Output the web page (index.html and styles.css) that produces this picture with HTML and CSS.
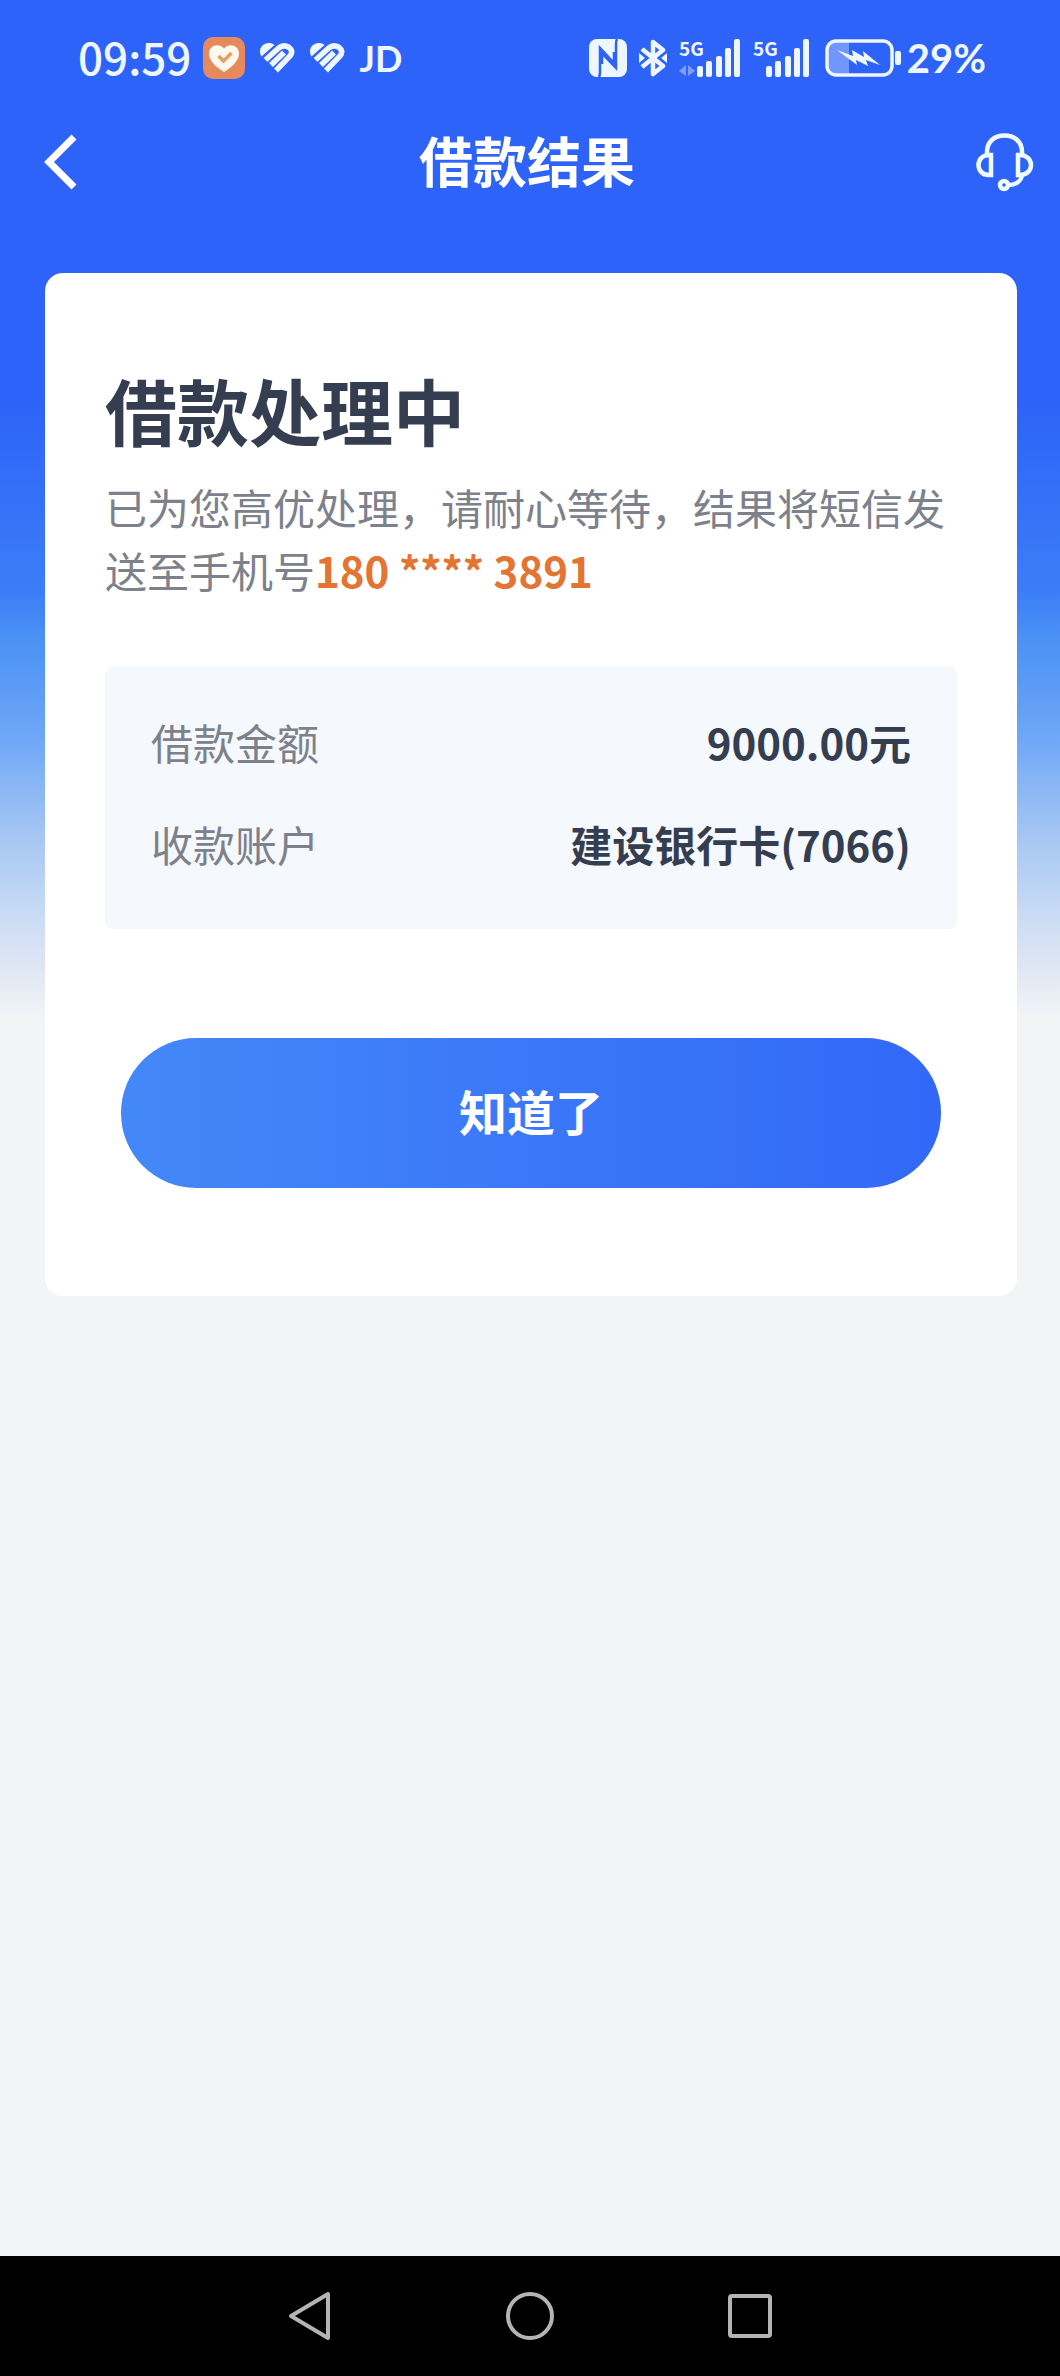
FILE: index.html
```
<!DOCTYPE html>
<html lang="zh-CN">
<head>
<meta charset="utf-8">
<meta name="viewport" content="width=device-width, initial-scale=1">
<title>借款结果</title>
<link rel="stylesheet" href="styles.css">
</head>
<body>
<div class="page">
  <div class="status">
    <div class="status-side">
      <span class="clock">09:59</span>
      <svg class="app-icon" width="42" height="42" viewBox="0 0 42 42" aria-hidden="true">
        <rect width="42" height="42" rx="10" fill="#e58a5c"/>
        <path d="M21 35C13 30 6 24 6 16.500C6 8 16 5.500 21 11.500C26 5.500 36 8 36 16.500C36 24 29 30 21 35Z" fill="#fff8ee"/>
        <path d="M15.500 19l5 5 8-8" fill="none" stroke="#e0a062" stroke-width="3.500"/>
      </svg>
      <svg class="brand" width="36" height="32" viewBox="0 0 36 32" aria-hidden="true">
        <path d="M2.500 14.500C-2 7 4 0 11 1Q14 1.500 15.500 3Z" fill="#eef6ff"/>
        <path d="M6.500 18L18.500 7Q24 2 29.500 5Q35 9 31 14L17 28.500M12 23L25 10.500" fill="none" stroke="#eef6ff" stroke-width="5.600"/>
      </svg>
      <svg class="brand" width="36" height="32" viewBox="0 0 36 32" aria-hidden="true">
        <path d="M2.500 14.500C-2 7 4 0 11 1Q14 1.500 15.500 3Z" fill="#eef6ff"/>
        <path d="M6.500 18L18.500 7Q24 2 29.500 5Q35 9 31 14L17 28.500M12 23L25 10.500" fill="none" stroke="#eef6ff" stroke-width="5.600"/>
      </svg>
      <span class="carrier">JD</span>
    </div>
    <div class="status-side status-right">
      <svg width="38" height="38" viewBox="0 0 38 38" aria-hidden="true">
        <rect width="38" height="38" rx="8" fill="#eef6ff"/>
        <path d="M10 38Q11 36 11 33V9L25 24V13M28 0Q27 2 27 5V29L13 14.500V25" fill="none" stroke="#2d63f8" stroke-width="2.500"/>
      </svg>
      <svg width="28" height="38" viewBox="0 0 28 38" aria-hidden="true">
        <path d="M3 10L24 27L14 35V3L24 11L3 28" fill="none" stroke="#eef6ff" stroke-width="4.500" stroke-linejoin="round"/>
        <path d="M0 14L6 19L0 24ZM28 14L22 19L28 24Z" fill="#eef6ff"/>
      </svg>
      <svg width="62" height="54" viewBox="0 -8 62 54" aria-hidden="true">
        <text class="net" x="0" y="17">5G</text>
        <g fill="#eef6ff"><rect x="18" y="27" width="6" height="11" rx="2"/><rect x="27" y="22" width="6" height="16" rx="2"/><rect x="37" y="17" width="6" height="21" rx="2"/><rect x="46" y="9" width="6" height="29" rx="2"/><rect x="55" y="0" width="6" height="38" rx="2"/></g>
        <path d="M0 32L7 26V37M9 26V37L16 32Z" fill="#7d9ffb"/>
      </svg>
      <svg width="57" height="54" viewBox="0 -8 57 54" aria-hidden="true">
        <text class="net" x="0" y="17">5G</text>
        <g fill="#eef6ff"><rect x="13" y="27" width="6" height="11" rx="2"/><rect x="22" y="22" width="6" height="16" rx="2"/><rect x="32" y="17" width="6" height="21" rx="2"/><rect x="41" y="9" width="6" height="29" rx="2"/><rect x="50" y="0" width="6" height="38" rx="2"/></g>
      </svg>
      <svg class="battery" width="76" height="38" viewBox="0 0 76 38" aria-hidden="true">
        <path d="M11 2H24V36H11Q2 36 2 27V11Q2 2 11 2Z" fill="#7296fb"/>
        <rect x="2" y="2" width="65" height="34" rx="9" fill="none" stroke="#eef6ff" stroke-width="3.500"/>
        <rect x="70" y="12" width="6" height="14" rx="2" fill="#eef6ff"/>
        <path d="M12 11L28 17L27 11L39 18L38 12L55 26L41 21L43 27L31 21L32 26Z" fill="#eef6ff"/>
      </svg>
      <span class="percent">29%</span>
    </div>
  </div>

  <header class="bar">
    <button class="icon-button" type="button" aria-label="返回">
      <svg width="34" height="58" viewBox="0 0 34 58"><path d="M30 4L5 29L30 54" fill="none" stroke="#fff" stroke-width="7"/></svg>
    </button>
    <h1 class="bar-title">借款结果</h1>
    <button class="icon-button" type="button" aria-label="客服">
      <svg width="58" height="60" viewBox="0 0 58 60" fill="none" stroke="#f0fbff" stroke-width="4.500">
        <path d="M11 23V20C11 10 18 3.500 28.500 3.500S46 10 46 20V23"/>
        <path d="M15 23V43H13C6 43 2.500 38 2.500 33S6 23 13 23ZM42 23V43H44C51 43 55 38 55 33S51 23 44 23Z"/>
        <path d="M46 43C45 49 40 53 33 53"/><circle cx="28" cy="53" r="4"/>
      </svg>
    </button>
  </header>

  <main class="card">
    <h2 class="heading">借款处理中</h2>
    <p class="note">已为您高优处理，请耐心等待，结果将短信发送至手机号<strong class="phone">180 **** 3891</strong></p>
    <dl class="details">
      <div class="row"><dt>借款金额</dt><dd>9000.00元</dd></div>
      <div class="row"><dt>收款账户</dt><dd>建设银行卡(7066)</dd></div>
    </dl>
    <button class="confirm" type="button">知道了</button>
  </main>

  <nav class="system" aria-label="系统导航">
    <button class="icon-button" type="button" aria-label="后退"><svg width="50" height="56" viewBox="0 0 50 56"><path d="M43 6V50L6 28Z"/></svg></button>
    <button class="icon-button" type="button" aria-label="主屏幕"><svg width="50" height="56" viewBox="0 0 50 56"><circle cx="25" cy="28" r="22"/></svg></button>
    <button class="icon-button" type="button" aria-label="最近任务"><svg width="50" height="56" viewBox="0 0 50 56"><rect x="5" y="8" width="40" height="40" rx="2"/></svg></button>
  </nav>
</div>
</body>
</html>
```
FILE: styles.css
```
* { box-sizing: border-box; }

body {
  margin: 0;
  background: #f3f4f6;
  font-family: "Noto Sans CJK SC", sans-serif;
  color: #353e50;
}

h1, h2, p, dl, dd { margin: 0; }
svg { display: block; }

.page {
  display: flex;
  flex-direction: column;
  min-height: 100vh;
  background: linear-gradient(180deg, #2d63f8 400px, #3c7df7 590px, #4b92f4 640px, #70a7f7 740px, #a5c6f3 835px, #d0dff4 930px, #e4e9f4 980px, #f3f4f6 1020px) no-repeat;
}

.status {
  display: flex;
  justify-content: space-between;
  align-items: center;
  height: 116px;
  padding: 0 74px 0 78px;
  color: #eef6ff;
}

.status-side { display: flex; align-items: center; }
.status-right { gap: 12px; }
.clock { padding-bottom: 4px; font-size: 44px; font-weight: 500; line-height: 60px; }
.app-icon { margin-left: 12px; }
.brand { margin-left: 14px; }
.carrier { margin-left: 14px; font: 700 36px/60px Lato, sans-serif; }
.net { font-size: 19px; font-weight: 700; fill: #eef6ff; }
.battery { margin-left: 3px; }
.percent { margin-left: -6px; font: 700 40px/60px Lato, sans-serif; }

.bar {
  display: flex;
  justify-content: space-between;
  align-items: center;
  height: 92px;
  padding: 0 26px 0 44px;
}

.icon-button {
  padding: 0;
  border: 0;
  background: none;
  cursor: pointer;
}

.bar-title {
  flex: 1;
  padding-bottom: 4px;
  font-size: 54px;
  font-weight: 700;
  line-height: 80px;
  text-align: center;
  color: #fff;
}

.card {
  margin: 65px 43px 0 45px;
  padding: 96px 60px 108px;
  border-radius: 18px;
  background: #fff;
}

.heading { font-size: 72px; font-weight: 700; line-height: 80px; }

.note {
  margin-top: 26px;
  font-size: 42px;
  line-height: 63px;
  color: #7d818c;
}

.phone { font-weight: 700; color: #e37432; }

.details {
  display: grid;
  gap: 40px;
  margin-top: 65px;
  padding: 45px 46px 54px;
  border-radius: 8px;
  background: #f5f8fd;
  font-size: 42px;
  line-height: 62px;
}

.row { display: flex; justify-content: space-between; }
.row dt { color: #7d818c; }
.row dd { font-weight: 700; }

.confirm {
  display: block;
  width: calc(100% - 32px);
  height: 150px;
  margin: 109px auto 0;
  padding: 0 0 6px;
  border: 0;
  border-radius: 75px;
  background: linear-gradient(90deg, #4488f8, #3268f7);
  color: #fff;
  font: 700 48px/72px "Noto Sans CJK SC", sans-serif;
  cursor: pointer;
}

.system {
  display: flex;
  justify-content: center;
  align-items: center;
  gap: 170px;
  height: 120px;
  margin-top: auto;
  background: #000;
}

.system svg { fill: none; stroke: #b4b4b4; stroke-width: 4; stroke-linejoin: round; }
```
